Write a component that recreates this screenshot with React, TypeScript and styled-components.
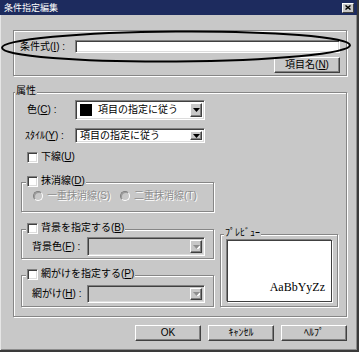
import styled, { createGlobalStyle } from 'styled-components'

const bg = '#c8c8c8'
const font = `"Liberation Sans", "Noto Sans CJK JP", sans-serif`

const GlobalStyle = createGlobalStyle`
  body {
    margin: 0;
    background: ${bg};
  }
  * {
    box-sizing: border-box;
  }
`

const Window = styled.div`
  position: relative;
  width: 359px;
  height: 352px;
  display: flex;
  flex-direction: column;
  background: ${bg};
  border-right: 2px solid #3a3a3a;
  border-bottom: 2px solid #3a3a3a;
  box-shadow: inset 1px 0 0 #e6e6e6, inset -1px -1px 0 #8c8c8c;
  font-family: ${font};
  font-size: 10px;
  line-height: 12px;
  color: #000;
`

const TitleBar = styled.div`
  height: 15px;
  display: flex;
  align-items: center;
  justify-content: space-between;
  padding: 0 3px 0 4px;
  background: #1d2b5e;
  color: #fff;
  font-size: 9px;
`

const CloseButton = styled.div`
  width: 12px;
  height: 10px;
  display: flex;
  align-items: center;
  justify-content: center;
  background: ${bg};
  border: 1px solid;
  border-color: #fff #404040 #404040 #fff;
`

const Body = styled.div`
  display: flex;
  flex-direction: column;
  padding: 15px 10px 0 13px;
`

const Group = styled.div<{ $w?: number; $h?: number }>`
  border: 1px solid #868686;
  box-shadow: inset 1px 1px 0 #fff, 1px 1px 0 #fff;
  width: ${(p) => (p.$w ? `${p.$w}px` : 'auto')};
  height: ${(p) => (p.$h ? `${p.$h}px` : 'auto')};
  flex-shrink: 0;
`

const Caption = styled.div<{ $x: number }>`
  display: flex;
  align-items: center;
  gap: 3px;
  width: max-content;
  height: 12px;
  margin: -8px 0 0 ${(p) => p.$x}px;
  padding: 0 1px;
  background: ${bg};
  white-space: nowrap;
`

const Inner = styled.div<{ $pad: string }>`
  display: flex;
  flex-direction: column;
  padding: ${(p) => p.$pad};
`

const Row = styled.div<{ $mt?: number; $h?: number; $pl?: number; $end?: boolean }>`
  display: flex;
  align-items: center;
  justify-content: ${(p) => (p.$end ? 'flex-end' : 'flex-start')};
  margin-top: ${(p) => p.$mt ?? 0}px;
  height: ${(p) => (p.$h ? `${p.$h}px` : 'auto')};
  padding-left: ${(p) => p.$pl ?? 0}px;
  white-space: nowrap;
`

const Label = styled.span<{ $w: number }>`
  width: ${(p) => p.$w}px;
  flex-shrink: 0;
`

const Text = styled.span``

const Key = styled.span`
  text-decoration: underline;
`

const TextBox = styled.div`
  flex: 1;
  height: 13px;
  background: #fff;
  border: 1px solid;
  border-color: #808080 #fff #fff #808080;
  box-shadow: inset 1px 1px 0 #404040, inset -1px -1px 0 #dcdcdc;
`

const Combo = styled.div<{ $w: number; $h: number; $disabled?: boolean }>`
  display: flex;
  align-items: stretch;
  width: ${(p) => p.$w}px;
  height: ${(p) => p.$h}px;
  padding: 2px;
  background: ${(p) => (p.$disabled ? bg : '#fff')};
  border: 1px solid;
  border-color: #808080 #fff #fff #808080;
  box-shadow: inset 1px 1px 0 #404040, inset -1px -1px 0 #dcdcdc;
`

const ComboValue = styled.div`
  flex: 1;
  display: flex;
  align-items: center;
  gap: 6px;
  padding-left: 2px;
`

const Swatch = styled.span`
  width: 12px;
  height: 12px;
  background: #000;
`

const DropButton = styled.div`
  width: 12px;
  display: flex;
  align-items: center;
  justify-content: center;
  background: ${bg};
  border: 1px solid;
  border-color: #fff #404040 #404040 #fff;
  box-shadow: inset -1px -1px 0 #808080;
`

const Check = styled.span`
  width: 11px;
  height: 11px;
  flex-shrink: 0;
  background: #fff;
  border: 1px solid;
  border-color: #808080 #fff #fff #808080;
  box-shadow: inset 1px 1px 0 #404040, inset -1px -1px 0 #dcdcdc;
`

const CheckItem = styled.label`
  display: flex;
  align-items: center;
  gap: 3px;
`

const Radio = styled.span`
  width: 10px;
  height: 10px;
  border-radius: 50%;
  flex-shrink: 0;
  background: ${bg};
  border: 1px solid;
  border-color: #808080 #fff #fff #808080;
  box-shadow: inset 1px 1px 0 #9a9a9a;
`

const RadioItem = styled.span<{ $w: number }>`
  display: flex;
  align-items: center;
  gap: 4px;
  width: ${(p) => p.$w}px;
  color: #8e8e8e;
  text-shadow: 1px 1px 0 #fff;
`

const Columns = styled.div`
  display: flex;
  align-items: flex-end;
  gap: 6px;
`

const LeftColumn = styled.div`
  display: flex;
  flex-direction: column;
`

const PreviewBox = styled.div`
  height: 62px;
  display: flex;
  align-items: flex-end;
  justify-content: flex-end;
  padding: 0 6px 8px 0;
  background: #fff;
  border: 1px solid #404040;
  box-shadow: -1px -1px 0 #808080, 1px 1px 0 #fff;
  font-family: "Liberation Serif", "DejaVu Serif", serif;
  font-size: 12px;
`

const Buttons = styled.div`
  display: flex;
  justify-content: flex-end;
  gap: 7px;
  margin-top: 8px;
`

const Button = styled.div`
  width: 66px;
  height: 16px;
  display: flex;
  align-items: center;
  justify-content: center;
  background: ${bg};
  border: 1px solid;
  border-color: #fff #404040 #404040 #fff;
  box-shadow: inset -1px -1px 0 #808080;
`

const Marker = styled.svg`
  position: absolute;
  left: 0;
  top: 29px;
  pointer-events: none;
`

function Arrow({ disabled }: { disabled?: boolean }) {
  return (
    <svg width="7" height="4" viewBox="0 0 7 4">
      {disabled && <path d="M1 1h7L4.5 5z" fill="#fff" />}
      <path d="M0 0h7L3.5 4z" fill={disabled ? '#8e8e8e' : '#000'} />
    </svg>
  )
}

export default function App() {
  return (
    <>
      <GlobalStyle />
      <Window>
        <TitleBar>
          <span>条件指定編集</span>
          <CloseButton>
            <svg width="6" height="5" viewBox="0 0 6 5">
              <path d="M0.5 0.5l5 4M5.5 0.5l-5 4" stroke="#000" strokeWidth="1.4" />
            </svg>
          </CloseButton>
        </TitleBar>
        <Body>
          <Group $h={46}>
            <Inner $pad="9px 6px 0 6px">
              <Row>
                <Label $w={55}>
                  条件式(<Key>I</Key>) :
                </Label>
                <TextBox />
              </Row>
              <Row $mt={4} $end>
                <Button>
                  <Text>
                    項目名(<Key>N</Key>)
                  </Text>
                </Button>
              </Row>
            </Inner>
          </Group>

          <Group style={{ marginTop: 16 }}>
            <Caption $x={1}>属性</Caption>
            <Inner $pad="0 8px 9px 7px">
              <Row $mt={3} $pl={6}>
                <Label $w={48}>
                  色(<Key>C</Key>) :
                </Label>
                <Combo $w={130} $h={20}>
                  <ComboValue>
                    <Swatch />
                    項目の指定に従う
                  </ComboValue>
                  <DropButton>
                    <Arrow />
                  </DropButton>
                </Combo>
              </Row>
              <Row $mt={8} $pl={4}>
                <Label $w={50}>
                  ｽﾀｲﾙ(<Key>Y</Key>) :
                </Label>
                <Combo $w={130} $h={15}>
                  <ComboValue>項目の指定に従う</ComboValue>
                  <DropButton>
                    <Arrow />
                  </DropButton>
                </Combo>
              </Row>
              <Row $mt={8} $h={12} $pl={6}>
                <CheckItem>
                  <Check />
                  <Text>
                    下線(<Key>U</Key>)
                  </Text>
                </CheckItem>
              </Row>

              <Columns>
                <LeftColumn>
                  <Group $w={193} style={{ marginTop: 19 }}>
                    <Caption $x={4}>
                      <Check />
                      <Text>
                        抹消線(<Key>D</Key>)
                      </Text>
                    </Caption>
                    <Inner $pad="3px 0 9px 11px">
                      <Row $h={12}>
                        <RadioItem $w={87}>
                          <Radio />
                          <Text>一重抹消線(S)</Text>
                        </RadioItem>
                        <RadioItem $w={90}>
                          <Radio />
                          <Text>二重抹消線(T)</Text>
                        </RadioItem>
                      </Row>
                    </Inner>
                  </Group>

                  <Group $w={193} style={{ marginTop: 17 }}>
                    <Caption $x={4}>
                      <Check />
                      <Text>
                        背景を指定する(<Key>B</Key>)
                      </Text>
                    </Caption>
                    <Inner $pad="3px 8px 2px 10px">
                      <Row>
                        <Label $w={55}>
                          背景色(<Key>F</Key>) :
                        </Label>
                        <Combo $w={118} $h={19} $disabled>
                          <ComboValue />
                          <DropButton>
                            <Arrow disabled />
                          </DropButton>
                        </Combo>
                      </Row>
                    </Inner>
                  </Group>

                  <Group $w={193} style={{ marginTop: 16 }}>
                    <Caption $x={4}>
                      <Check />
                      <Text>
                        網がけを指定する(<Key>P</Key>)
                      </Text>
                    </Caption>
                    <Inner $pad="5px 8px 3px 10px">
                      <Row>
                        <Label $w={55}>
                          網がけ(<Key>H</Key>) :
                        </Label>
                        <Combo $w={118} $h={18} $disabled>
                          <ComboValue />
                          <DropButton>
                            <Arrow disabled />
                          </DropButton>
                        </Combo>
                      </Row>
                    </Inner>
                  </Group>
                </LeftColumn>

                <Group $w={118}>
                  <Caption $x={3}>ﾌﾟﾚﾋﾞｭｰ</Caption>
                  <Inner $pad="1px 5px 4px 6px">
                    <PreviewBox>AaBbYyZz</PreviewBox>
                  </Inner>
                </Group>
              </Columns>
            </Inner>
          </Group>

          <Buttons>
            <Button>OK</Button>
            <Button>ｷｬﾝｾﾙ</Button>
            <Button>ﾍﾙﾌﾟ</Button>
          </Buttons>
        </Body>

        <Marker width="356" height="36" viewBox="0 0 356 36">
          <ellipse
            cx="176"
            cy="17.5"
            rx="174"
            ry="15"
            fill="none"
            stroke="#000"
            strokeWidth="2"
            transform="rotate(-0.4 176 17.5)"
          />
        </Marker>
      </Window>
    </>
  )
}
